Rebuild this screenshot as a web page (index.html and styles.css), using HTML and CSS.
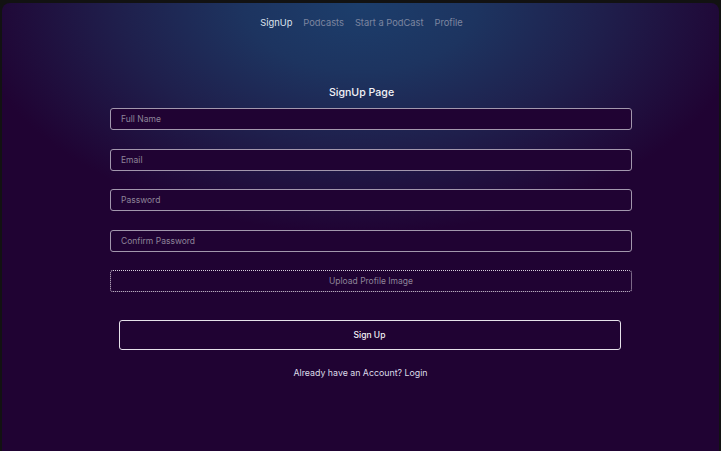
FILE: index.html
```html
<!DOCTYPE html>
<html lang="en">
<head>
<meta charset="utf-8">
<title>SignUp</title>
<link rel="stylesheet" href="styles.css">
</head>
<body>
<div class="frame">
  <nav class="nav">
    <a class="nav-link active" href="#">SignUp</a>
    <a class="nav-link" href="#">Podcasts</a>
    <a class="nav-link" href="#">Start a PodCast</a>
    <a class="nav-link" href="#">Profile</a>
  </nav>
  <main class="page">
    <h1 class="title">SignUp Page</h1>
    <form class="form">
      <input class="field" type="text" placeholder="Full Name">
      <input class="field" type="email" placeholder="Email">
      <input class="field" type="password" placeholder="Password">
      <input class="field" type="password" placeholder="Confirm Password">
      <label class="upload">Upload Profile Image</label>
      <button class="btn" type="button">Sign Up</button>
      <p class="login">Already have an Account? Login</p>
    </form>
  </main>
</div>
</body>
</html>
```

FILE: styles.css
```css
* { box-sizing: border-box; }
html, body {
  margin: 0;
  padding: 0;
  background: #121212;
  height: 100%;
  overflow: hidden;
}
body {
  font-family: Inter, "Noto Sans", sans-serif;
  padding: 3px 2px 0 2px;
}
.frame {
  height: 448px;
  border-radius: 8px 8px 0 0;
  background:
    radial-gradient(ellipse 390px 230px at 50% 0%, #1c3e6c 0%, #1d3460 30%, #1f1f4c 62%, #200333 100%),
    #200333;
  background-color: #200333;
}
.nav {
  display: flex;
  justify-content: center;
  gap: 11px;
  padding-top: 13px;
  padding-left: 2px;
  height: 34px;
}
.nav-link {
  font-size: 9.3px;
  line-height: 13px;
  color: #7d86a0;
  text-decoration: none;
}
.nav-link.active { color: #dfe4ee; }
.page {
  display: flex;
  flex-direction: column;
  align-items: center;
}
.title {
  margin: 48px 0 0 0;
  font-size: 10.6px;
  line-height: 16px;
  font-weight: 500;
  color: #f2f2f6;
  padding-left: 2px;
}
.form {
  width: 522px;
  margin: 7px 0 0 21px;
  display: flex;
  flex-direction: column;
  align-items: center;
}
.field, .upload {
  width: 100%;
  height: 22px;
  margin-bottom: 18.5px;
  border: 1.5px solid #a297ad;
  border-radius: 3px;
  background: #200333;
  color: #e0dde6;
  font-family: inherit;
  font-size: 8.5px;
  padding: 0 10px;
  outline: none;
}
.field::placeholder { color: #8e8399; }
.upload {
  display: flex;
  align-items: center;
  justify-content: center;
  border: 1.2px dotted #d7d0dd;
  color: #8e8399;
  margin-bottom: 28px;
}
.btn {
  width: 502px;
  height: 30px;
  border: 1.5px solid #e6e2ea;
  border-radius: 3px;
  background: #200333;
  color: #f4f2f6;
  font-family: inherit;
  font-size: 8.5px;
  font-weight: 500;
  margin-left: -3px;
}
.login {
  margin: 16px 0 0 -21px;
  font-size: 8.8px;
  line-height: 14px;
  color: #dcdbe8;
}
```
